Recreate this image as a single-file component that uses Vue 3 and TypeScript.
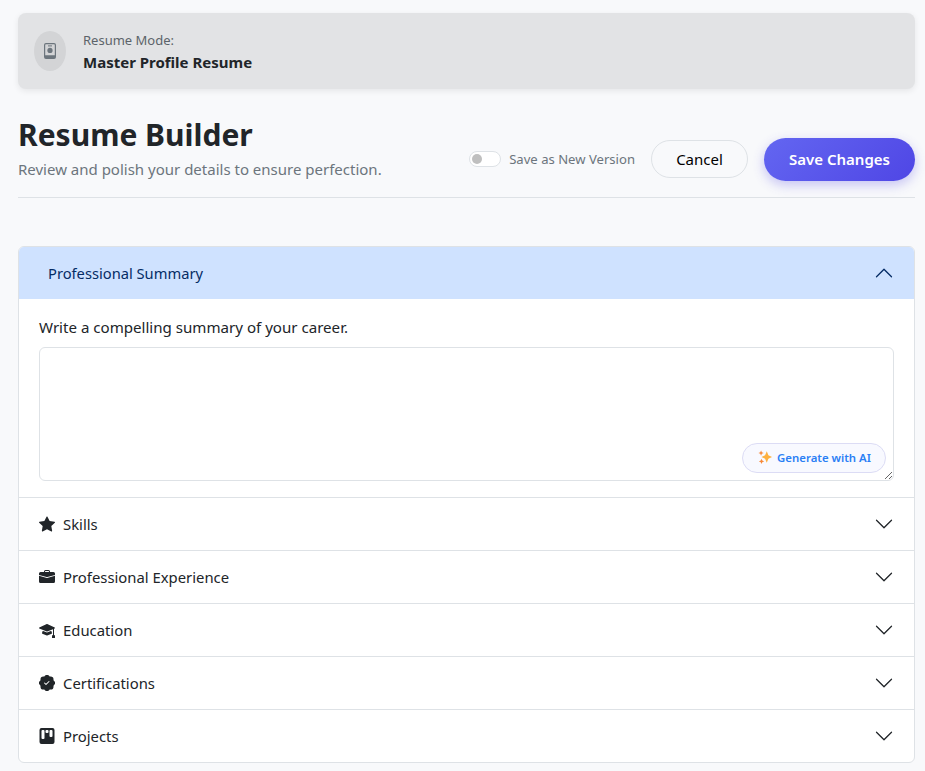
<script setup lang="ts">
import { ref } from 'vue'

const saveAsNew = ref(false)
const summary = ref('')

const sections = [
  { key: 'skills', title: 'Skills', icon: 'star' },
  { key: 'experience', title: 'Professional Experience', icon: 'briefcase' },
  { key: 'education', title: 'Education', icon: 'cap' },
  { key: 'certifications', title: 'Certifications', icon: 'patch' },
  { key: 'projects', title: 'Projects', icon: 'kanban' },
]
</script>

<template>
  <div class="page">
    <div class="mode-bar">
      <div class="mode-icon">
        <svg width="16" height="16" viewBox="0 0 16 16" fill="#6c757d">
          <path d="M4 0h8a2 2 0 0 1 2 2v12a2 2 0 0 1-2 2H4a2 2 0 0 1-2-2V2a2 2 0 0 1 2-2zm0 1.2a.8.8 0 0 0-.8.8v10.300h9.600V2a.8.8 0 0 0-.8-.8H4z" />
          <rect x="6" y="2.400" width="4" height="1" />
          <circle cx="8" cy="7.400" r="2.600" />
        </svg>
      </div>
      <div class="mode-text">
        <span class="mode-label">Resume Mode:</span>
        <strong class="mode-name">Master Profile Resume</strong>
      </div>
    </div>

    <header class="head">
      <div class="head-text">
        <h1>Resume Builder</h1>
        <p>Review and polish your details to ensure perfection.</p>
      </div>
      <div class="head-actions">
        <label class="switch">
          <input v-model="saveAsNew" type="checkbox" />
          <span class="switch-track"><span class="switch-knob"></span></span>
          <span class="switch-label">Save as New Version</span>
        </label>
        <button class="btn-cancel" type="button">Cancel</button>
        <button class="btn-save" type="button">Save Changes</button>
      </div>
    </header>

    <div class="accordion">
      <section class="acc-item">
        <div class="acc-header open">
          <span class="acc-open-title">Professional Summary</span>
          <svg class="chevron" width="20" height="20" viewBox="0 0 16 16" fill="#052c65">
            <path fill-rule="evenodd" d="M1.646 11.354a.5.5 0 0 0 .708 0L8 5.707l5.646 5.647a.5.5 0 0 0 .708-.708l-6-6a.5.5 0 0 0-.708 0l-6 6a.5.5 0 0 0 0 .708z" />
          </svg>
        </div>
        <div class="acc-body">
          <label class="summary-label" for="summary">Write a compelling summary of your career.</label>
          <div class="summary-wrap">
            <textarea id="summary" v-model="summary" class="summary-input"></textarea>
            <button class="btn-ai" type="button">
              <svg width="14" height="14" viewBox="0 0 16 16">
                <path fill="#fdb03f" d="M10 1.500 11.900 6.100 16 8l-4.100 1.900L10 14.500 8.100 9.900 4 8l4.100-1.900z" />
                <path fill="#f7893a" d="M3.500 .5 4.400 2.600 6.500 3.500 4.400 4.400 3.500 6.500 2.600 4.400 .5 3.500 2.600 2.600z" />
                <path fill="#f7893a" d="M4 10l.9 2.100L7 13l-2.100.9L4 16l-.9-2.100L1 13l2.100-.9z" />
              </svg>
              Generate with AI
            </button>
          </div>
        </div>
      </section>

      <section v-for="s in sections" :key="s.key" class="acc-item">
        <div class="acc-header">
          <span class="acc-title">
            <svg class="acc-icon" width="16" height="16" viewBox="0 0 16 16" fill="#212529">
              <path v-if="s.icon === 'star'" d="M3.612 15.443c-.386.198-.824-.149-.746-.592l.83-4.730L.173 6.765c-.329-.314-.158-.888.283-.950l4.898-.696L7.538.792c.197-.390.730-.390.927 0l2.184 4.327 4.898.696c.441.062.612.636.282.950l-3.522 3.356.830 4.730c.078.443-.360.790-.746.592L8 13.187l-4.389 2.256z" />
              <template v-else-if="s.icon === 'briefcase'">
                <path d="M6.500 1A1.500 1.500 0 0 0 5 2.500V3H1.500A1.500 1.500 0 0 0 0 4.500v1.384l7.614 2.030a1.500 1.500 0 0 0 .772 0L16 5.884V4.500A1.500 1.500 0 0 0 14.500 3H11v-.5A1.500 1.500 0 0 0 9.500 1h-3zm0 1h3a.5.5 0 0 1 .5.500V3H6v-.5a.5.5 0 0 1 .5-.5z" />
                <path d="M0 12.500A1.500 1.500 0 0 0 1.500 14h13a1.500 1.500 0 0 0 1.500-1.500V6.850L8.129 8.947a.5.5 0 0 1-.258 0L0 6.850v5.650z" />
              </template>
              <template v-else-if="s.icon === 'cap'">
                <path d="M8.211 2.047a.5.5 0 0 0-.422 0l-7.500 3.500a.5.500 0 0 0 .025.917l7.500 3a.5.500 0 0 0 .372 0L14 7.140V13a1 1 0 0 0-1 1v2h3v-2a1 1 0 0 0-1-1V6.739l.686-.275a.5.500 0 0 0 .025-.917l-7.500-3.500z" />
                <path d="M4.176 9.032a.5.500 0 0 0-.656.327l-.500 1.700a.5.500 0 0 0 .294.605l4.500 1.800a.5.500 0 0 0 .372 0l4.500-1.800a.5.500 0 0 0 .294-.605l-.500-1.700a.5.500 0 0 0-.656-.327L8 10.466 4.176 9.032z" />
              </template>
              <path v-else-if="s.icon === 'patch'" d="M10.067.870a2.890 2.890 0 0 0-4.134 0l-.622.638-.890-.011a2.890 2.890 0 0 0-2.924 2.924l.010.890-.636.622a2.890 2.890 0 0 0 0 4.134l.637.622-.011.890a2.890 2.890 0 0 0 2.924 2.924l.890-.010.622.636a2.890 2.890 0 0 0 4.134 0l.622-.637.890.011a2.890 2.890 0 0 0 2.924-2.924l-.010-.890.636-.622a2.890 2.890 0 0 0 0-4.134l-.637-.622.011-.890a2.890 2.890 0 0 0-2.924-2.924l-.890.010-.622-.636zm.287 5.984-3 3a.5.500 0 0 1-.708 0l-1.500-1.500a.5.500 0 1 1 .708-.708L7 8.793l2.646-2.647a.5.500 0 0 1 .708.708z" />
              <path v-else d="M2.500 0a2 2 0 0 0-2 2v12a2 2 0 0 0 2 2h11a2 2 0 0 0 2-2V2a2 2 0 0 0-2-2h-11zm5 2h1a1 1 0 0 1 1 1v1a1 1 0 0 1-1 1h-1a1 1 0 0 1-1-1V3a1 1 0 0 1 1-1zm-5 1a1 1 0 0 1 1-1h1a1 1 0 0 1 1 1v7a1 1 0 0 1-1 1h-1a1 1 0 0 1-1-1V3zm9-1h1a1 1 0 0 1 1 1v5a1 1 0 0 1-1 1h-1a1 1 0 0 1-1-1V3a1 1 0 0 1 1-1z" />
            </svg>
            {{ s.title }}
          </span>
          <svg class="chevron" width="20" height="20" viewBox="0 0 16 16" fill="#212529">
            <path fill-rule="evenodd" d="M1.646 4.646a.5.5 0 0 1 .708 0L8 10.293l5.646-5.647a.5.5 0 0 1 .708.708l-6 6a.5.5 0 0 1-.708 0l-6-6a.5.5 0 0 1 0-.708z" />
          </svg>
        </div>
      </section>
    </div>
  </div>
</template>

<style>
html,
body {
  margin: 0;
  background: #f8f9fb;
}
</style>

<style scoped>
.page {
  box-sizing: border-box;
  height: 771px;
  overflow: hidden;
  padding: 13px 10px 0 18px;
  font-family: "Noto Sans", "Open Sans", sans-serif;
  color: #212529;
}

.mode-bar {
  display: flex;
  align-items: center;
  gap: 16px;
  height: 76px;
  padding: 0 16px;
  box-sizing: border-box;
  background: #e2e3e5;
  border-radius: 8px;
  box-shadow: 0 2px 6px rgba(0, 0, 0, 0.08);
}

.mode-icon {
  display: flex;
  align-items: center;
  justify-content: center;
  width: 32px;
  height: 40px;
  border-radius: 50%;
  background: #d3d4d6;
}

.mode-text {
  display: flex;
  flex-direction: column;
  gap: 3px;
  padding-left: 1px;
}

.mode-label {
  font-size: 13px;
  line-height: 18px;
  color: #5c636a;
}

.mode-name {
  font-size: 15px;
  line-height: 20px;
  font-weight: 700;
}

.head {
  display: flex;
  align-items: flex-end;
  justify-content: space-between;
  height: 109px;
  padding-bottom: 16px;
  box-sizing: border-box;
  border-bottom: 1px solid #dee2e6;
}

.head-text {
  padding-bottom: 1px;
}

.head-text h1 {
  margin: 0;
  font-size: 30px;
  line-height: 38px;
  font-weight: 700;
}

.head-text p {
  margin: 4px 0 0;
  font-size: 15px;
  line-height: 22px;
  color: #6c757d;
}

.head-actions {
  display: flex;
  align-items: center;
}

.switch {
  display: flex;
  align-items: center;
  gap: 8px;
  margin: 0 16px 1px 0;
}

.switch input {
  display: none;
}

.switch-track {
  display: block;
  box-sizing: border-box;
  width: 32px;
  height: 16px;
  padding: 2px;
  border: 1px solid #dee2e6;
  border-radius: 8px;
  background: #fff;
}

.switch-knob {
  display: block;
  width: 10px;
  height: 10px;
  border-radius: 50%;
  background: #bfbfbf;
}

.switch-label {
  font-size: 13.1px;
  color: #6c757d;
}

.btn-cancel {
  width: 97px;
  height: 38px;
  margin: 0 16px 1px 0;
  border: 1px solid #dee2e6;
  border-radius: 19px;
  background: #f8f9fb;
  color: #000;
  font: 400 15px "Noto Sans", sans-serif;
}

.btn-save {
  width: 151px;
  height: 43px;
  padding: 0 0 2px;
  border: 0;
  border-radius: 22px;
  background: linear-gradient(135deg, #6366f1, #4f46e5);
  color: #fff;
  font: 600 15px "Noto Sans", sans-serif;
  box-shadow: 0 4px 12px rgba(79, 70, 229, 0.3);
}

.accordion {
  margin-top: 48px;
  border: 1px solid #dee2e6;
  border-radius: 6px;
  overflow: hidden;
  background: #fff;
}

.acc-item + .acc-item {
  border-top: 1px solid #dee2e6;
}

.acc-header {
  display: flex;
  align-items: center;
  justify-content: space-between;
  box-sizing: border-box;
  height: 52px;
  padding: 0 20px;
  font-size: 14.85px;
}

.acc-header.open {
  background: #cfe2ff;
  color: #052c65;
  padding-left: 29px;
}

.acc-open-title {
  font-size: 14.7px;
}

.acc-title {
  display: flex;
  align-items: center;
  gap: 8px;
}

.acc-icon {
  flex: none;
}

.acc-body {
  padding: 16px 20px;
}

.summary-label {
  display: block;
  margin-bottom: 8px;
  font-size: 15.1px;
  line-height: 24px;
}

.summary-wrap {
  position: relative;
  display: flex;
}

.summary-input {
  box-sizing: border-box;
  width: 100%;
  height: 134px;
  padding: 6px 12px;
  border: 1px solid #dee2e6;
  border-radius: 6px;
  background: #fff;
  outline: none;
}

.btn-ai {
  position: absolute;
  right: 8px;
  bottom: 8px;
  display: flex;
  align-items: center;
  justify-content: center;
  gap: 5px;
  width: 144px;
  height: 30px;
  padding: 0 0 2px 1px;
  border: 1px solid #dcdcf5;
  border-radius: 15px;
  background: #f8f9ff;
  color: #2a7ff5;
  font: 600 11.4px "Noto Sans", sans-serif;
}
</style>
